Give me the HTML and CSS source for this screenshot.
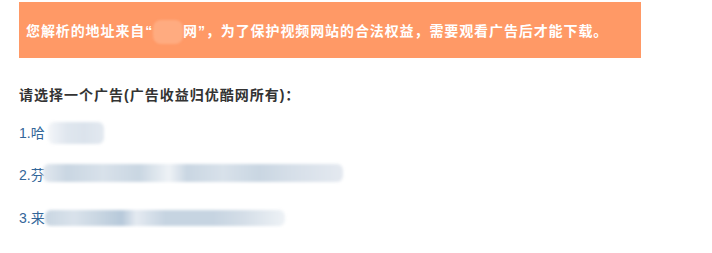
FILE: index.html
```html
<!DOCTYPE html>
<html lang="zh">
<head>
<meta charset="utf-8">
<link rel="stylesheet" href="styles.css">
</head>
<body>
<div class="page">
  <div class="notice">您解析的地址来自“<span class="smudge-o">优酷</span>网”，为了保护视频网站的合法权益，需要观看广告后才能下载。</div>
  <div class="title">请选择一个广告(广告收益归优酷网所有)：</div>
  <ul class="ads">
    <li><a class="ad" href="#">1.哈<span class="blur b1"></span></a></li>
    <li><a class="ad" href="#">2.芬<span class="blur b2"></span></a></li>
    <li><a class="ad" href="#">3.来<span class="blur b3"></span></a></li>
  </ul>
</div>
</body>
</html>
```
FILE: styles.css
```css
html, body { margin: 0; padding: 0; background: #fff; }
.page {
  padding: 2px 0 0 19px;
  font-family: "Liberation Sans", "Noto Sans CJK SC", sans-serif;
  font-size: 14px;
}
.notice {
  width: 622px;
  height: 56px;
  line-height: 59px;
  box-sizing: border-box;
  padding-left: 7px;
  background: #ff9966;
  color: #fff;
  font-weight: bold;
  letter-spacing: 0.9px;
  white-space: nowrap;
}
.smudge-o {
  display: inline-block;
  width: 30px;
  height: 24px;
  line-height: 24px;
  vertical-align: middle;
  color: transparent;
  background: #ffab80;
  border-radius: 8px;
  filter: blur(1px);
}
.title {
  margin-top: 27px;
  line-height: 20px;
  font-weight: bold;
  color: #333;
  letter-spacing: 1px;
}
.ads {
  list-style: none;
  margin: 17px 0 0;
  padding: 0;
  display: flex;
  flex-direction: column;
  gap: 23px;
}
.ads li { line-height: 20px; height: 20px; }
.ad {
  color: #336699;
  text-decoration: none;
  display: inline-flex;
  align-items: center;
  white-space: nowrap;
}
.blur {
  display: inline-block;
  height: 22px;
  border-radius: 6px;
  filter: blur(1.5px);
}
.b1 {
  width: 56px;
  margin-left: 3px;
  background: linear-gradient(90deg, #f4f6f9 0%, #e8edf3 18%, #dfe6ee 35%, #dbe3ec 65%, #e3e9f0 100%);
}
.b2 {
  width: 300px;
  height: 18px;
  margin-left: -2px;
  margin-top: -4px;
  background: linear-gradient(90deg, #e2e8ef 0%, #c9d6e2 8%, #d8e1ea 20%, #c9d6e2 32%, #eef2f6 42%, #c9d6e2 48%, #d8e1ea 60%, #c9d6e2 72%, #d5dee8 82%, #e4e9f0 100%);
}
.b3 {
  width: 240px;
  height: 16px;
  margin-left: 0;
  background: linear-gradient(90deg, #c9d6e2 0%, #d9e2eb 12%, #c9d6e2 22%, #b7c9da 32%, #e4eaf1 38%, #c6d4e1 50%, #c6d4e1 70%, #d3dde7 82%, #eef2f6 100%);
}
```
